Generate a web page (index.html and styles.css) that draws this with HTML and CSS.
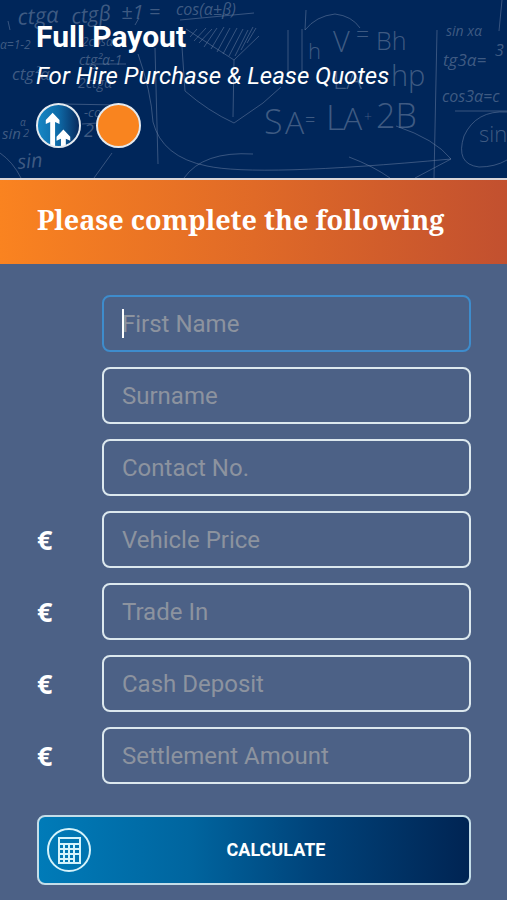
FILE: index.html
```html
<!DOCTYPE html>
<html lang="en">
<head>
<meta charset="utf-8">
<meta name="viewport" content="width=device-width, initial-scale=1">
<title>Full Payout</title>
<link rel="stylesheet" href="styles.css">
</head>
<body>
<header class="header">
  <svg class="chalk" viewBox="0 0 507 178" preserveAspectRatio="xMidYMid slice" aria-hidden="true">
    <g class="chalk-text">
      <text x="18" y="25" font-size="22" transform="rotate(-4 18 25)">ctgα</text>
      <text x="72" y="24" font-size="21" transform="rotate(-6 72 24)">ctgβ</text>
      <text x="121" y="19" font-size="20">±1 =</text>
      <text x="176" y="15" font-size="16">cos(α±β)</text>
      <text x="0" y="49" font-size="12">α=1-2</text>
      <text x="82" y="46" font-size="12">2cosα</text>
      <text x="79" y="65" font-size="14">ctg²α-1</text>
      <text x="12" y="80" font-size="17">ctg²α</text>
      <text x="78" y="88" font-size="14">2ctgα</text>
      <text x="84" y="117" font-size="13">-cos</text>
      <text x="84" y="137" font-size="18">2</text>
      <text x="2" y="139" font-size="15">sin</text>
      <text x="20" y="126" font-size="10">α</text>
      <text x="23" y="137" font-size="11">2</text>
      <text x="18" y="169" font-size="20" transform="rotate(-5 18 169)">sin</text>
      <text x="446" y="36" font-size="14">sin xα</text>
      <text x="443" y="66" font-size="17">tg3α=</text>
      <text x="495" y="56" font-size="16">3</text>
      <text x="442" y="102" font-size="16">cos3α=c</text>
    </g>
    <g class="chalk-text chalk-upright">
      <text x="308" y="59" font-size="22">h</text>
      <text x="333" y="52" font-size="29">V</text>
      <text x="356" y="43" font-size="23">=</text>
      <text x="376" y="50" font-size="25">Bh</text>
      <text x="333" y="89" font-size="26">LA</text>
      <text x="391" y="86" font-size="29">hp</text>
      <text x="264" y="134" font-size="34">S</text>
      <text x="285" y="134" font-size="32">A</text>
      <text x="305" y="126" font-size="18">=</text>
      <text x="326" y="130" font-size="35">L</text>
      <text x="343" y="130" font-size="32">A</text>
      <text x="364" y="122" font-size="14">+</text>
      <text x="376" y="128" font-size="34">2B</text>
      <text x="479" y="142" font-size="22">sin</text>
    </g>
    <g class="chalk-line">
      <path d="M8 21l2 9M139 18l-4 7M180 20l74-7M85 64l41 0M62 104l57 1M82 124l32-2"/>
      <path d="M0 153Q13 162 21 178M112 153L94 178"/>
      <path d="M155 48l3 116M138 54Q151 91 153 122Q162 157 207 166Q257 177 451 159"/>
      <path d="M182 47l3 44Q208 111 234 123l29-20 18-16M186 29l48 31-1 57M234 60l25-24"/>
      <path d="M190 37l7-8M194 41l12-13M199 43l13-14M204 47l13-19M211 49l13-22M217 52l13-24M223 54l14-26M229 56l14-27M235 56l13-26M241 50l12-23M247 43l9-15"/>
      <path d="M184 178Q203 151 253 154M349 157Q373 166 390 178"/>
      <path d="M288 30v43M302 29v42M306 10l-1 20Q316 16 335 14Q352 16 360 28"/>
      <path d="M396 126Q435 139 451 159L415 178M437 30l-3 148M502 0l-3 31M455 111h52"/>
      <path d="M507 112Q476 110 464 136Q455 164 479 167Q495 167 507 160"/>
    </g>
  </svg>
  <h1 class="title">Full Payout</h1>
  <p class="subtitle">For Hire Purchase &amp; Lease Quotes</p>
  <div class="badges">
    <svg class="badge" viewBox="0 0 46 46" role="img" aria-label="Two rising arrows">
      <defs>
        <linearGradient id="badgeBlue"><stop offset="0" stop-color="#1688c6"/><stop offset=".5" stop-color="#0e6aa7"/><stop offset="1" stop-color="#07275a"/></linearGradient>
        <clipPath id="badgeClip"><circle cx="23" cy="23" r="22"/></clipPath>
      </defs>
      <circle cx="23" cy="23" r="22" fill="url(#badgeBlue)"/>
      <g fill="#fff" clip-path="url(#badgeClip)">
        <path d="M17 10L24 17.500V21.500L19.500 19.500V46H14.500V19.500L10 21.500V17.500Z"/>
        <path d="M28 27L35 34.500V38.500L30.500 36.500V46H25.500V36.500L21 38.500V34.500Z"/>
      </g>
      <circle class="badge-ring" cx="23" cy="23" r="22"/>
    </svg>
    <svg class="badge" viewBox="0 0 46 46" role="img" aria-label="Orange marker">
      <circle class="badge-ring badge-orange" cx="23" cy="23" r="22"/>
    </svg>
  </div>
</header>
<main>
  <h2 class="banner">Please complete the following</h2>
  <form class="form">
    <div class="group">
      <div class="row">
        <div class="field field-active">
          <input class="input" type="text" placeholder="First Name" aria-label="First Name">
          <span class="caret"></span>
        </div>
      </div>
      <div class="row"><div class="field"><input class="input" type="text" placeholder="Surname" aria-label="Surname"></div></div>
      <div class="row"><div class="field"><input class="input" type="tel" placeholder="Contact No." aria-label="Contact No."></div></div>
    </div>
    <div class="group">
      <div class="row"><label class="currency" for="price">€</label><div class="field"><input class="input" id="price" type="text" inputmode="decimal" placeholder="Vehicle Price"></div></div>
      <div class="row"><label class="currency" for="trade">€</label><div class="field"><input class="input" id="trade" type="text" inputmode="decimal" placeholder="Trade In"></div></div>
      <div class="row"><label class="currency" for="deposit">€</label><div class="field"><input class="input" id="deposit" type="text" inputmode="decimal" placeholder="Cash Deposit"></div></div>
      <div class="row"><label class="currency" for="settlement">€</label><div class="field"><input class="input" id="settlement" type="text" inputmode="decimal" placeholder="Settlement Amount"></div></div>
    </div>
    <button class="calculate" type="button">
      <svg class="calc-icon" viewBox="0 0 44 44" aria-hidden="true">
        <circle cx="22" cy="22" r="21" fill="none" stroke="#d5f3fb" stroke-width="2"/>
        <path fill="#d5f3fb" fill-rule="evenodd" d="M11 9H34V36H11ZM13 11V15H32V11ZM13 17V20H16V17ZM18 17V20H21V17ZM23 17V20H26V17ZM28 17V20H32V17ZM13 22V25H16V22ZM18 22V25H21V22ZM23 22V25H26V22ZM28 22V25H32V22ZM13 27V30H16V27ZM18 27V30H21V27ZM23 27V30H26V27ZM28 27V34H32V27ZM13 32V34H16V32ZM18 32V34H21V32ZM23 32V34H26V32Z"/>
      </svg>
      <span class="calc-label">CALCULATE</span>
    </button>
  </form>
</main>
</body>
</html>
```
FILE: styles.css
```css
* {
  box-sizing: border-box;
}

body {
  margin: 0;
  min-height: 100vh;
  background: #4c6186;
  color: #fff;
  font-family: Roboto, "Liberation Sans", sans-serif;
}

.header {
  position: relative;
  overflow: hidden;
  padding: 20px 36px 30px;
  background: #00265a;
  border-bottom: 2px solid #d9d5d8;
}

.chalk {
  position: absolute;
  inset: 0;
  width: 100%;
  height: 100%;
}

.chalk-text {
  fill: #6a7f9f;
  fill-opacity: 0.6;
  font-family: "Open Sans", "Noto Sans", sans-serif;
  font-style: italic;
  font-weight: 400;
}

.chalk-upright {
  font-style: normal;
  font-weight: 300;
}

.chalk-line {
  fill: none;
  stroke: #6f83a5;
  stroke-opacity: 0.5;
  stroke-width: 1;
}

.title,
.subtitle,
.badges {
  position: relative;
  margin: 0;
}

.title {
  font-size: 30px;
  line-height: 34px;
  font-weight: 700;
}

.subtitle {
  margin-top: 7px;
  font-size: 24px;
  line-height: 30px;
  font-style: italic;
}

.badges {
  display: flex;
  gap: 15px;
  margin-top: 12px;
}

.badge {
  width: 45px;
  height: 45px;
}

.badge-ring {
  fill: none;
  stroke: #e3e9ef;
  stroke-width: 2;
}

.badge-orange {
  fill: #f9841f;
}

.banner {
  margin: 0;
  padding: 20px 37px 24px;
  background: linear-gradient(to right, #fa8320, #e06a27 50%, #c2502f);
  font-family: "Noto Serif", "Droid Serif", "DejaVu Serif", serif;
  font-size: 27px;
  line-height: 40px;
  font-weight: 700;
}

.form {
  padding: 31px 36px 15px 37px;
}

.group {
  display: grid;
  gap: 15px;
  margin-bottom: 15px;
}

.row {
  display: flex;
  align-items: center;
  justify-content: flex-end;
}

.currency {
  flex: 0 0 65px;
  font-family: "Noto Sans", "Open Sans", sans-serif;
  font-size: 27px;
  line-height: 32px;
  font-weight: 700;
}

.field {
  position: relative;
  flex: 0 0 calc(100% - 65px);
}

.input {
  display: block;
  width: 100%;
  height: 57px;
  padding: 0 18px;
  border: 2px solid #dce8ee;
  border-radius: 8px;
  background: transparent;
  color: #fff;
  font: 24px/32px Roboto, "Liberation Sans", sans-serif;
  outline: none;
}

.input::placeholder {
  color: #8c939f;
  opacity: 1;
}

.field-active .input,
.input:focus {
  border-color: #3e8ccc;
}

.caret {
  position: absolute;
  left: 20px;
  top: 14px;
  width: 2px;
  height: 29px;
  background: #fff;
}

.calculate {
  display: flex;
  align-items: center;
  width: 100%;
  height: 70px;
  margin-top: 31px;
  padding: 0 8px;
  border: 2px solid #c4dde8;
  border-radius: 8px;
  background: linear-gradient(to right, #007bb8, #00659f 35%, #004279 65%, #002453);
  color: #fff;
  font: 700 18px/24px Roboto, "Liberation Sans", sans-serif;
}

.calc-icon {
  width: 44px;
  height: 44px;
}

.calc-label {
  flex: 1;
  text-align: center;
}
```
